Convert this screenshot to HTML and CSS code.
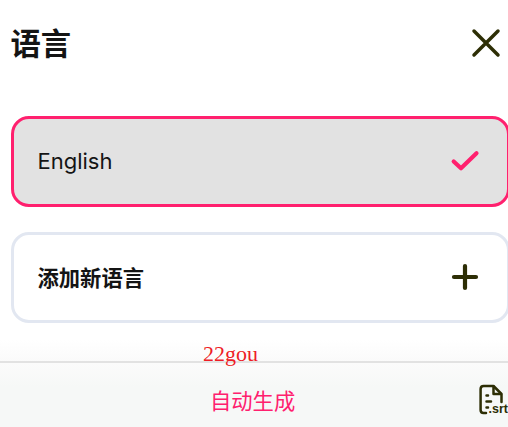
FILE: index.html
```
<!DOCTYPE html>
<html lang="zh-CN">

<head>
    <meta charset="UTF-8">
    <meta name="viewport" content="width=device-width, initial-scale=1.0">
    <title>语言</title>
    <link rel="stylesheet" href="styles.css">
</head>

<body>
    <div class="panel">
        <header class="panel-header">
            <h1>语言</h1>
            <svg class="icon-close" viewBox="0 0 30 30">
                <path d="M3 3 L27 27 M27 3 L3 27" />
            </svg>
        </header>

        <!-- 语言列表 -->
        <main class="language-list">
            <div class="language-item selected">
                <span class="english">English</span>
                <svg class="icon-check" viewBox="0 0 30 30">
                    <path d="M3.7 15.5 L11 22.3 L26.5 7.3" />
                </svg>
            </div>
            <div class="language-item">
                <span class="add-label">添加新语言</span>
                <svg class="icon-plus" viewBox="0 0 30 30">
                    <path d="M15 4 V26 M4 15 H26" />
                </svg>
            </div>
        </main>

        <div class="mark">22gou</div>

        <footer class="panel-footer">
            <span class="auto-label">自动生成</span>
            <svg class="icon-srt" viewBox="0 0 32 34">
                <path d="M9 30 H6.5 Q3.6 30 3.6 27 V6 Q3.6 3 6.6 3 H16.5 L24.5 11 V19" />
                <path d="M16.5 3.5 V11 H24" />
                <path d="M9.5 12.5 H11 M9.5 18.5 H14 M9.5 24.5 H11" />
                <text x="11.5" y="30">.srt</text>
            </svg>
        </footer>
    </div>
</body>

</html>
```
FILE: styles.css
```
* {
    box-sizing: border-box;
}

body {
    margin: 0;
    height: 427px;
    overflow: hidden;
    background-color: #fff;
    color: #141414;
    font-family: "Noto Sans CJK SC", sans-serif;
}

.panel {
    display: flex;
    flex-direction: column;
    width: 510px;
    height: 427px;
    background: linear-gradient(#fff 340px, #fafafa 362px);
}

.panel-header {
    display: flex;
    justify-content: space-between;
    align-items: center;
    height: 86px;
    padding: 0 9px 0 10.5px;
}

h1 {
    margin: 0;
    padding-bottom: 2px;
    font-size: 30.3px;
    line-height: 44px;
    font-weight: 700;
}

svg {
    display: block;
    flex: none;
    width: 30px;
    height: 30px;
    fill: none;
    stroke: #2d2e05;
    stroke-linecap: round;
    stroke-linejoin: round;
}

.icon-close {
    stroke-width: 3.5;
}

.language-list {
    display: flex;
    flex-direction: column;
    gap: 25px;
    padding: 29.5px 0 0 10.5px;
}

.language-item {
    display: flex;
    justify-content: space-between;
    align-items: center;
    height: 91px;
    padding: 0 27px 0 24px;
    border: 3px solid #e2e7f1;
    border-radius: 18px;
    background-color: #fff;
}

.language-item.selected {
    border-color: #ff206e;
    background-color: #e2e2e2;
}

.english {
    font-family: Inter, sans-serif;
    font-size: 22px;
    line-height: 30px;
}

.add-label {
    font-size: 21.3px;
    line-height: 30px;
    font-weight: 700;
}

.icon-check {
    stroke: #ff206e;
    stroke-width: 4.2;
}

.icon-plus {
    stroke-width: 4.2;
}

/* 文字压在底栏分隔线上 */
.mark {
    position: relative;
    z-index: 1;
    height: 38.5px;
    padding: 18px 0 0 203px;
    color: #ee1c25;
    font-family: "Liberation Serif", serif;
    font-size: 22px;
    line-height: 25px;
}

.panel-footer {
    display: flex;
    align-items: center;
    flex: 1;
    padding-left: 210px;
    border-top: 2px solid #e2e2e2;
    background: linear-gradient(#fbfbfb, #f6f8f7 24px);
}

.auto-label {
    width: 266.5px;
    color: #ff206e;
    font-size: 21.3px;
    line-height: 30px;
    padding-top: 10px;
}

.icon-srt {
    width: 32px;
    height: 34px;
    margin-top: 10px;
    stroke-width: 2.5;
}

.icon-srt text {
    fill: #2d2e05;
    stroke: none;
    font-family: "Liberation Sans", sans-serif;
    font-size: 12.5px;
    font-weight: 700;
}
```
